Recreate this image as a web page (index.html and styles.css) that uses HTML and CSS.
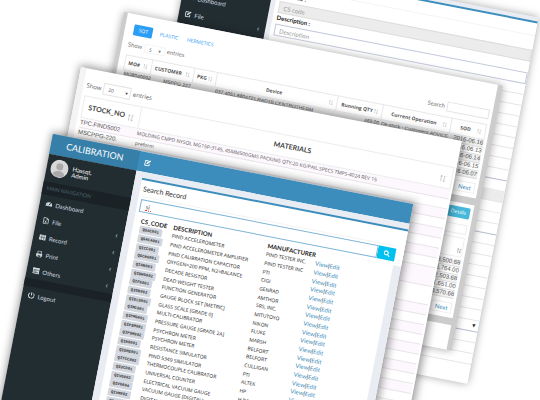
FILE: index.html
```html
<!DOCTYPE html>
<html lang="en">
<head>
<meta charset="utf-8">
<title>Calibration</title>
<link rel="stylesheet" href="styles.css">
</head>
<body>
<svg class="defs" aria-hidden="true">
  <symbol id="edit" viewBox="0 0 16 16"><path d="M12 9v5H2V3h8" fill="none" stroke="currentColor" stroke-width="2"/><path d="M5 11l1-4 7-6 2 2-7 7z" fill="currentColor"/></symbol>
  <symbol id="gauge" viewBox="0 0 16 16"><path d="M0 13a8 9 0 1 1 16 0z" fill="currentColor"/><path d="M8 11l3-6M3 9h1M12 9h1" stroke="#222d32" stroke-width="2"/></symbol>
  <symbol id="file" viewBox="0 0 16 16"><path d="M3 1h7l4 4v10H3zM10 1v4h4M6 8l4 5M10 8l-4 5" fill="none" stroke="currentColor" stroke-width="1.6"/></symbol>
  <symbol id="grid" viewBox="0 0 16 16"><path d="M0 2h16v12H0z" fill="currentColor"/><path d="M0 8h16M6 2v12M11 2v12" stroke="#222d32"/></symbol>
  <symbol id="print" viewBox="0 0 16 16"><path d="M1 13V7h14v6h-3v-2H4v2z" fill="currentColor"/><path d="M4 7V1h8v6M4 10v5h8v-5" fill="none" stroke="currentColor" stroke-width="1.6"/></symbol>
  <symbol id="list" viewBox="0 0 16 16"><path d="M0 1h16v14H0z" fill="currentColor"/><path d="M2 6h12M2 9h7M2 12h12" stroke="#222d32" stroke-width="1.3"/></symbol>
  <symbol id="power" viewBox="0 0 16 16"><path d="M4 3a6.500 6.500 0 1 0 8 0M8 1v7" fill="none" stroke="currentColor" stroke-width="2.200"/></symbol>
  <symbol id="search" viewBox="0 0 16 16"><path d="M11 7A4.500 4.500 0 1 1 2 7a4.500 4.500 0 0 1 9 0zM10 10l5 5" fill="none" stroke="currentColor" stroke-width="2.400"/></symbol>
  <symbol id="sort" viewBox="0 0 16 16"><path d="M4 1v14M2 4l2-3 2 3M11 1v14M9 12l2 3 2-3M13 2h2" fill="none" stroke="currentColor" stroke-width="1.500"/></symbol>
</svg>
<main class="canvas">

  <section class="window form-window">
    <nav class="sidebar">
      <a class="item" href="#"><svg><use href="#gauge"/></svg>Dashboard</a>
      <a class="item" href="#"><svg><use href="#edit"/></svg>File<span class="chev">‹</span></a>
    </nav>
    <form class="form-box">
      <div class="form-head"></div>
      <label for="code">CS Code :</label>
      <input id="code" class="filled" placeholder="CS code">
      <label for="desc">Description :</label>
      <input id="desc" placeholder="Description">
      <div class="lines">
        <i></i><i></i><i></i><i></i><i></i><i></i><i></i><i></i><i class="edge"></i><i></i><i class="filled"></i><i></i><i></i><i class="edge"></i><i></i><i></i><i></i><i></i><i></i><i></i><i></i><i></i><i class="edge"><b>▾</b></i><i></i><i></i><i></i>
      </div>
    </form>
  </section>

  <section class="window lots-window">
    <div class="card lots">
      <div class="tabs"><a class="active" href="#">SOT</a><a href="#">PLASTIC</a><a href="#">HERMETICS</a></div>
      <div class="tools">
        <label>Show <span class="pick"><select><option>5</option></select></span> entries</label>
        <label class="find">Search <input></label>
      </div>
      <table>
        <colgroup><col class="c27"><col class="c43"><col class="c23"><col class="c123"><col class="c46"><col class="c70"><col></colgroup>
        <thead><tr><th>MO#<svg><use href="#sort"/></svg></th><th>CUSTOMER<svg><use href="#sort"/></svg></th><th>PKG<svg><use href="#sort"/></svg></th><th>Device<svg><use href="#sort"/></svg></th><th>Running QTY<svg class="on"><use href="#sort"/></svg></th><th>Current Operation<svg><use href="#sort"/></svg></th><th>SOD<svg><use href="#sort"/></svg></th></tr></thead>
        <tbody>
          <tr><td>MO8040092</td><td class="end">MSPPG.227</td><td></td><td>037,4051,8804721,RAD1B,CENTROTHERM</td><td class="end">469.00</td><td>De-stock - Customers.ADVICE</td><td>2016-06.16</td></tr>
          <tr><td></td><td></td><td></td><td></td><td></td><td></td><td>2016.06.13</td></tr>
          <tr><td></td><td></td><td></td><td></td><td></td><td></td><td>2016-06.14</td></tr>
          <tr><td></td><td></td><td></td><td></td><td></td><td></td><td>2016-06.15</td></tr>
          <tr><td></td><td></td><td></td><td></td><td></td><td></td><td>2016.06.07</td></tr>
        </tbody>
      </table>
      <div class="pager"><a href="#">Next</a></div>
    </div>
    <div class="card totals">
      <div class="pager"><button>Details</button></div>
      <div class="blank"></div>
      <div class="sorter"><svg class="on"><use href="#sort"/></svg></div>
      <ul><li>3,500.68</li><li>6,764.00</li><li>2,503.68</li><li>1,651.00</li><li>3,570.68</li></ul>
      <div class="pager"><a href="#">Next</a></div>
    </div>
    <div class="card rest"></div>
  </section>

  <section class="window stock-window">
    <label class="show">Show <span class="pick"><select><option>20</option></select></span> entries</label>
    <table>
      <colgroup><col class="c58"><col></colgroup>
      <thead><tr><th>STOCK_NO<svg><use href="#sort"/></svg></th><th>MATERIALS<svg><use href="#sort"/></svg></th></tr></thead>
      <tbody>
        <tr><td>TPC.FIND5002</td><td class="mat">MOLDING CMPD NYSOL MG15P-3145, 45MM500GMS PACKING QTY:20 KG/PAIL.SPECS TMPS-4024 REV 15</td></tr>
        <tr><td>MSCPPG-220.</td><td class="mat">preform</td></tr>
        <tr><td></td><td></td></tr><tr><td></td><td></td></tr><tr><td></td><td></td></tr><tr><td></td><td></td></tr><tr><td></td><td></td></tr><tr><td></td><td></td></tr>
        <tr class="tall"><td></td><td></td></tr>
        <tr class="tall"><td></td><td></td></tr>
        <tr><td></td><td></td></tr><tr><td></td><td></td></tr><tr><td></td><td></td></tr><tr><td></td><td></td></tr><tr><td></td><td></td></tr><tr><td></td><td></td></tr><tr><td></td><td></td></tr><tr><td></td><td></td></tr><tr><td></td><td></td></tr><tr><td></td><td></td></tr><tr><td></td><td></td></tr><tr><td></td><td></td></tr><tr><td></td><td></td></tr><tr><td></td><td></td></tr>
      </tbody>
    </table>
  </section>

  <section class="window main-window">
    <header><h1>CALIBRATION</h1><button class="toggle" aria-label="Toggle navigation"><svg><use href="#edit"/></svg></button></header>
    <div class="body">
      <nav class="sidebar">
        <div class="user"><svg class="avatar" viewBox="0 0 18 18"><circle cx="9" cy="9" r="9" fill="#d8d8d8"/><circle cx="9" cy="7" r="3.500" fill="#aaa"/><path d="M3 15c1-5 11-5 12 0a9 9 0 0 1-12 0z" fill="#aaa"/></svg><p>Hassqt,<br>Admin</p></div>
        <div class="band">MAIN NAVIGATION</div>
        <a class="item" href="#"><svg><use href="#gauge"/></svg>Dashboard</a>
        <a class="item" href="#"><svg><use href="#file"/></svg>File<span class="chev">‹</span></a>
        <a class="item" href="#"><svg><use href="#grid"/></svg>Record<span class="chev">‹</span></a>
        <a class="item" href="#"><svg><use href="#print"/></svg>Print<span class="chev">‹</span></a>
        <a class="item" href="#"><svg><use href="#list"/></svg>Others<span class="chev">‹</span></a>
        <div class="band thin"></div>
        <a class="item" href="#"><svg><use href="#power"/></svg>Logout</a>
      </nav>
      <div class="content">
        <form class="search-box">
          <h2>Search Record</h2>
          <div class="search-row"><span class="field"><input aria-label="Search" value="si" spellcheck="false"><i class="squiggle"></i></span><button aria-label="Search"><svg><use href="#search"/></svg></button></div>
        </form>
        <table class="records">
          <thead><tr><th>CS_CODE</th><th>DESCRIPTION</th><th>MANUFACTURER</th><th></th></tr></thead>
          <tbody>
            <tr><td><span>QSAC001</span></td><td>PIND ACCELEROMETER</td><td>PIND TESTER INC.</td><td><a href="#">View</a>|<a href="#">Edit</a></td></tr>
            <tr><td><span>QSACA001</span></td><td>PIND ACCELEROMETER AMPLIFIER</td><td>PIND TESTER INC</td><td><a href="#">View</a>|<a href="#">Edit</a></td></tr>
            <tr><td><span>QICC001</span></td><td>PIND CALIBRATION CAPACITOR</td><td>PTI</td><td><a href="#">View</a>|<a href="#">Edit</a></td></tr>
            <tr><td><span>QSCRG001</span></td><td>OXYGEN=200 PPM, N2=BALANCE</td><td>CIGI</td><td><a href="#">View</a>|<a href="#">Edit</a></td></tr>
            <tr><td><span>QIAN003</span></td><td>DECADE RESISTOR</td><td>GENRAD</td><td><a href="#">View</a>|<a href="#">Edit</a></td></tr>
            <tr><td><span>QIDWG002</span></td><td>DEAD WEIGHT TESTER</td><td>AMTHOR</td><td><a href="#">View</a>|<a href="#">Edit</a></td></tr>
            <tr><td><span>QIFG001</span></td><td>FUNCTION GENERATOR</td><td>SRS, INC.</td><td><a href="#">View</a>|<a href="#">Edit</a></td></tr>
            <tr><td><span>QIGB002</span></td><td>GAUGE BLOCK SET [METRIC]</td><td>MITUTOYO</td><td><a href="#">View</a>|<a href="#">Edit</a></td></tr>
            <tr><td><span>QIGLS001</span></td><td>GLASS SCALE [GRADE 0]</td><td>NIKON</td><td><a href="#">View</a>|<a href="#">Edit</a></td></tr>
            <tr><td><span>QIMC001</span></td><td>MULTI-CALIBRATOR</td><td>FLUKE</td><td><a href="#">View</a>|<a href="#">Edit</a></td></tr>
            <tr><td><span>QIPMG001</span></td><td>PRESSURE GAUGE [GRADE 2A]</td><td>MARSH</td><td><a href="#">View</a>|<a href="#">Edit</a></td></tr>
            <tr><td><span>QIPSM001</span></td><td>PSYCHRON METER</td><td>BELFORT</td><td><a href="#">View</a>|<a href="#">Edit</a></td></tr>
            <tr><td><span>QIPSM002</span></td><td>PSYCHRON METER</td><td>BELFORT</td><td><a href="#">View</a>|<a href="#">Edit</a></td></tr>
            <tr><td><span>QIRS001</span></td><td>RESISTANCE SIMULATOR</td><td>CULLIGAN</td><td><a href="#">View</a>|<a href="#">Edit</a></td></tr>
            <tr><td><span>QISMS001</span></td><td>PIND 5349 SIMULATOR</td><td>PTI</td><td><a href="#">View</a>|<a href="#">Edit</a></td></tr>
            <tr><td><span>QITCC002</span></td><td>THERMOCOUPLE CALIBRATOR</td><td>ALTEK</td><td><a href="#">View</a>|<a href="#">Edit</a></td></tr>
            <tr><td><span>QIUC001</span></td><td>UNIVERSAL COUNTER</td><td>HP</td><td><a href="#">View</a>|<a href="#">Edit</a></td></tr>
            <tr><td><span>QIVG003</span></td><td>ELECTRICAL VACUUM GAUGE</td><td>H.ROSHI</td><td><a href="#">View</a>|<a href="#">Edit</a></td></tr>
            <tr><td><span>QIVG004</span></td><td>VACUUM GAUGE [DIGITAL]</td><td></td><td></td></tr>
            <tr><td><span>QIVM002</span></td><td>DIGITAL VERNIER</td><td></td><td></td></tr>
            <tr><td><span>QIVM005</span></td><td></td><td></td><td></td></tr>
          </tbody>
        </table>
      </div>
    </div>
  </section>
</main>
</body>
</html>
```
FILE: styles.css
```css
* { box-sizing: border-box; }
body { margin: 0; background: #fff; font: 6px/8px Lato, "Open Sans", sans-serif; color: #333; }
h1, h2, p, ul { margin: 0; padding: 0; font-weight: 400; }
ul { list-style: none; }
a { color: #3c8dbc; text-decoration: none; }
button { border: 0; padding: 0; font: inherit; color: #fff; }
input, select { font: inherit; color: #555; border: 1px solid #e4e4e4; background: #fff; border-radius: 0; padding: 0 4px; min-width: 0; }
select { appearance: none; width: 100%; height: 100%; }
.pick { position: relative; display: block; }
.pick::after { content: "▾"; position: absolute; right: 3px; top: 2px; font-size: 5px; line-height: 6px; }
table { border-collapse: collapse; table-layout: fixed; width: 100%; }
th, td { padding: 0; text-align: left; white-space: nowrap; }
svg { width: 7px; height: 7px; flex: none; }
.defs { display: none; }

.canvas { position: relative; height: 100vh; overflow: hidden; }
.window { position: absolute; transform: rotate(11deg); transform-origin: 0 0; background: #fff; box-shadow: 1px 0 9px 2px rgba(0, 0, 0, .4); }

/* Sidebar */
.sidebar { width: 89px; flex: none; background: #222d32; color: #d5dee2; }
.item { display: flex; align-items: center; gap: 3px; height: 17px; padding: 0 6px; color: #d3dde1; }
.chev { margin-left: auto; font-size: 8px; }
.user { display: flex; gap: 4px; height: 28px; padding: 4px; color: #fff; font-weight: 700; line-height: 6px; }
.user p { padding-top: 4px; }
.avatar { width: 18px; height: 18px; }
.band { height: 13px; padding: 2px 4px; background: #1a2226; color: #4b646f; font-size: 5px; }
.band.thin { height: 8px; }

/* Record search window */
.main-window { left: 53px; top: 134px; width: 367px; }
.main-window header { display: flex; align-items: center; height: 20px; background: #3c8dbc; }
.main-window h1 { width: 89px; line-height: 20px; text-align: center; background: #367fa9; color: #fff; font-size: 9px; }
.toggle { display: flex; margin-left: 6px; background: none; }
.body { display: flex; height: 340px; }
.content { flex: 1; padding: 6px 0 0 7px; background: #e9edf3; }
.search-box { height: 38px; padding: 0 8px 0 3px; background: #fff; border-top: 2px solid #3c8dbc; }
.search-box h2 { height: 17px; font-size: 7px; line-height: 17px; border-bottom: 1px solid #f4f4f4; margin-bottom: 2px; }
.search-row { display: flex; height: 13px; }
.field { position: relative; display: flex; flex: 1; }
.field input { width: 100%; border-color: #7db4d6; padding: 0 5px; }
.squiggle { position: absolute; left: 6px; bottom: 2px; width: 6px; border-bottom: 1px dotted #f33; }
.search-row button { display: flex; align-items: center; justify-content: center; width: 18px; background: #00c0ef; }
.records { display: block; width: auto; height: 276px; margin-right: 8px; padding-left: 7px; background: #fff; color: #333; }
.records thead { display: block; }
.records tr { display: grid; grid-template-columns: 33px 96px 50px 1fr; align-items: center; }
.records th { line-height: 9px; color: #222; }
.records tbody { display: grid; grid-template-rows: repeat(21, 1fr); height: 182px; }
.records td { font: 5px/8px "Open Sans", sans-serif; height: 8px; color: #222; }
.records td:last-child { font: 6px/8px Lato, sans-serif; }
.records span { display: inline-block; vertical-align: top; padding: 0 3px; border-radius: 1px; line-height: 8px; background: #d2d6de; color: #333; font-family: "Liberation Mono", monospace; font-size: 4px; font-weight: 700; }

/* Stock window */
.stock-window { left: 81px; top: 67px; width: 388px; height: 400px; border-left: 6px solid #f4f4f4; padding: 11px 2px 0 3px; font: 7px/11px "Open Sans", sans-serif; color: #555; }
.show { display: flex; align-items: center; gap: 2px; height: 12px; font-size: 6px; }
.show .pick { width: 28px; height: 12px; font-size: 5px; }
.show .pick::after { top: 3px; }
.stock-window table { margin-top: 4px; }
.stock-window th { height: 22px; padding: 0 5px; border: 1px solid #ececec; font: 700 7px/11px Lato, sans-serif; color: #444; }
.stock-window th svg, .lots th svg { float: right; margin-top: 4px; color: #bbb; }
.stock-window th + th { text-align: center; }
.stock-window td { height: 10px; border: 1px solid #e8e5e8; border-width: 1px 0; font: 6px/9px "Liberation Sans", sans-serif; }
.stock-window td.mat { font: 5px/9px "Open Sans", sans-serif; }
.stock-window tbody tr:nth-child(odd) { background: #fdf8fd; }
.stock-window .tall td { height: 19px; }
.c58 { width: 58px; }

/* Lots window */
.lots-window { left: 124px; top: 12px; width: 386px; background: #ccc; padding: 0 5px 0 4px; color: #555; box-shadow: 0 0 8px rgba(0, 0, 0, .35); }
.card { background: #fff; padding: 0 3px 0 6px; }
.lots { height: 116px; padding-top: 10px; }
.tabs { display: flex; gap: 5px; padding-left: 3px; font: 5px/11px "Open Sans", sans-serif; }
.tabs a { padding: 0 2px; color: #2a9df4; }
.tabs a.active { padding: 0 5px; border-radius: 1px; background: #2a9df4; color: #fff; }
.tools { display: flex; justify-content: space-between; align-items: center; height: 20px; color: #777; }
.tools label { display: flex; align-items: center; gap: 2px; }
.tools .pick { width: 21px; height: 9px; font-size: 5px; }
.tools select { border-color: #f4f4f4; }
.tools input { width: 43px; height: 10px; }
.lots th { height: 15px; padding: 0 3px; font: 700 5px/10px "Open Sans", sans-serif; border: 1px solid #e8e8e8; }
.lots th:nth-child(n+4) { text-align: center; }
.lots th svg { width: 5px; height: 5px; margin-top: 3px; }
.lots td { height: 8px; padding: 0 1px; font: 5px/7px "Liberation Sans", sans-serif; border-bottom: 1px solid #ddd; }
.lots td.end { text-align: right; }
.lots td:last-child { padding: 0; font-size: 6px; text-align: right; }
.lots tbody tr:nth-child(odd) { background: #eee; }
.c27 { width: 27px; } .c43 { width: 43px; } .c23 { width: 23px; } .c123 { width: 123px; } .c46 { width: 46px; } .c70 { width: 70px; }
svg.on { color: #777; }
.pager { display: flex; justify-content: flex-end; padding-top: 4px; }
.pager a { padding: 0 3px; border: 1px solid #eee; line-height: 9px; }
.pager button { padding: 0 4px; line-height: 11px; border-radius: 1px; background: #46b8da; font-size: 5px; }
.totals { height: 115px; margin-top: 7px; }
.blank { height: 10px; margin-top: 6px; border: 1px solid #eee; }
.sorter { display: flex; justify-content: flex-end; align-items: center; height: 20px; margin-top: 3px; padding-top: 6px; border: 1px solid #eee; }
.sorter svg { width: 5px; height: 5px; }
.totals ul { margin-top: 2px; }
.totals li { height: 8px; border-bottom: 1px solid #ddd; text-align: right; font: 6px/7px "Liberation Sans", sans-serif; }
.totals li:nth-child(odd) { background: #f4f4f4; }
.rest { height: 25px; margin-top: 7px; }

/* Form window */
.form-window { left: 191px; top: -50px; width: 354px; height: 373px; display: flex; background: #e9edf3; box-shadow: 0 0 8px rgba(0, 0, 0, .35); }
.form-window .sidebar { width: 88px; padding-top: 38px; }
.form-box { display: flex; flex-direction: column; flex: 1; margin: 4px 0 0 5px; padding-left: 4px; background: #fff; border-top: 2px solid #3c8dbc; }
.form-head { height: 13px; border-bottom: 1px solid #f4f4f4; }
.form-box label { font-weight: 700; line-height: 8px; padding-top: 4px; color: #222; height: 12px; }
.form-box input { height: 12px; margin-top: 2px; border-color: #c4c9dc; }
.form-box input + label { height: 9px; padding-top: 1px; }
.form-box input.filled { background: #ececec; border-color: #ddd; }
.form-box input::placeholder { color: #999; }
.lines i { display: block; height: 11px; border-bottom: 1px solid #e6e6e6; }
.lines i.edge { border-color: #b9bdd0; }
.lines i.filled { background: #ececec; }
.lines b { display: block; padding-right: 3px; text-align: right; font-style: normal; }
```
